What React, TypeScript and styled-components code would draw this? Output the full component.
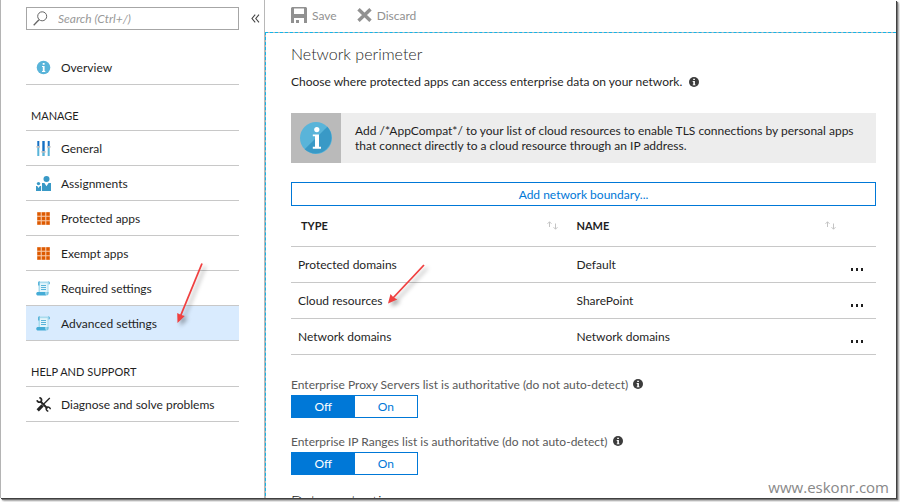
import React from "react";
import styled, { createGlobalStyle, css } from "styled-components";

const GlobalStyle = createGlobalStyle`
  * { box-sizing: border-box; }
  body {
    margin: 0;
    background: #fff;
    color: #1f1f1f;
    font: 12px/15px Lato, "Open Sans", sans-serif;
  }
  button, input { font: inherit; color: inherit; }
  button { padding: 0; border: 0; background: none; cursor: pointer; }
  h1, h2, p, ul, fieldset { margin: 0; padding: 0; }
  fieldset { border: 0; min-width: 0; }
  ul { list-style: none; }
`;

const Backdrop = styled.div`
  display: flex;
  height: 100vh;
  padding: 0 4px 4px 0;
  overflow: hidden;
`;

const Frame = styled.div`
  position: relative;
  display: flex;
  flex: 1;
  min-width: 0;
  border-left: 1px solid #b4b4b4;
  background: #fff;
  box-shadow: 1px 1px 0 #404040, 2px 2px 1px #777, 3px 3px 2px #aaa;
`;

const Sidebar = styled.aside`
  flex: none;
  width: 263px;
  padding: 7px 25px 0;
  overflow: hidden;
`;

const SearchRow = styled.div`
  display: flex;
  align-items: center;
  margin: 0 -22px 20px 0;
`;

const SearchBox = styled.label`
  display: flex;
  align-items: center;
  width: 213px;
  height: 23px;
  padding: 0 6px;
  gap: 10px;
  border: 1px solid #a6a6a6;
`;

const SearchInput = styled.input`
  flex: 1;
  min-width: 0;
  padding: 0;
  border: 0;
  outline: 0;
  background: none;
  &::placeholder {
    color: #999;
    font-style: italic;
    opacity: 1;
  }
`;

const CollapseButton = styled.button`
  display: flex;
  margin-left: 12px;
`;

const GroupTitle = styled.h2`
  margin-top: 17px;
  padding-left: 5px;
  font-size: 11px;
  font-weight: 400;
  line-height: 28px;
`;

const NavList = styled.ul<{ $ruled?: boolean }>`
  ${(p) => p.$ruled && css`border-top: 1px solid #c8c8c8;`}
`;

const NavItem = styled.li<{ $selected?: boolean }>`
  position: relative;
  border-bottom: 1px solid #c8c8c8;
  background: ${(p) => (p.$selected ? "#d9ebfe" : "transparent")};
`;

const NavLink = styled.a`
  display: flex;
  align-items: center;
  height: 34px;
  padding-left: 10px;
  gap: 10px;
  color: inherit;
  text-decoration: none;
`;

const Main = styled.main`
  flex: 1;
  min-width: 0;
  overflow: hidden;
  border-left: 1px solid #b8b8b8;
`;

const Toolbar = styled.div`
  display: flex;
  align-items: center;
  height: 32px;
  padding: 0 0 2px 26px;
  gap: 20px;
`;

const ToolButton = styled.button`
  display: flex;
  align-items: center;
  gap: 5px;
  color: #919191;
`;

const Content = styled.div`
  padding: 11px 20px 0 25px;
  border-top: 1px dashed #12b5ea;
  border-left: 1px dashed #12b5ea;
  background: linear-gradient(#fff, #fff) padding-box, linear-gradient(#b8b8b8, #b8b8b8) border-box;
`;

const SectionTitle = styled.h1`
  font-size: 16px;
  font-weight: 300;
  line-height: 20px;
`;

const Description = styled.p`
  display: flex;
  align-items: center;
  gap: 7px;
  margin-top: 10px;
  line-height: 16px;
`;

const Banner = styled.div`
  display: flex;
  margin-top: 23px;
  background: #ededed;
`;

const BannerIcon = styled.div`
  display: grid;
  place-items: center;
  flex: none;
  width: 50px;
  height: 50px;
  background: #bababa;
`;

const BannerText = styled.p`
  align-self: center;
  padding: 0 14px;
`;

const AddButton = styled.button`
  display: block;
  width: 100%;
  height: 24px;
  margin-top: 19px;
  border: 1px solid #0078d7;
  color: #0078d7;
`;

const Table = styled.table`
  width: 100%;
  table-layout: fixed;
  border-collapse: collapse;
`;

const HeadCell = styled.th<{ $width?: number; $indent?: number }>`
  width: ${(p) => (p.$width ? `${p.$width}px` : "auto")};
  height: 40px;
  padding: 0 12px 0 ${(p) => p.$indent ?? 7}px;
  border-bottom: 1px solid #c8c8c8;
  font-size: 11px;
  font-weight: 700;
  text-align: left;
`;

const HeadInner = styled.div`
  display: flex;
  align-items: center;
  justify-content: space-between;
`;

const Cell = styled.td`
  position: relative;
  height: 36px;
  padding: 0 0 0 7px;
  border-bottom: 1px solid #c8c8c8;
`;

const MoreButton = styled.button`
  display: flex;
  align-items: flex-end;
  width: 14px;
  height: 14px;
  margin-left: -4px;
`;

const Setting = styled.fieldset`
  margin-top: 21px;
  & + & { margin-top: 15px; }
`;

const SettingLabel = styled.legend`
  display: flex;
  align-items: center;
  gap: 5px;
  height: 19px;
  padding: 0 0 2px;
  color: #595959;
`;

const Toggle = styled.div`
  display: grid;
  grid-template-columns: 1fr 1fr;
  width: 127px;
  height: 23px;
  border: 1px solid #0078d7;
`;

const Option = styled.label`
  display: grid;
  place-items: center;
  color: #0078d7;
  cursor: pointer;
  &:has(input:checked) {
    background: #0078d7;
    color: #fff;
  }
`;

const HiddenRadio = styled.input`
  position: absolute;
  opacity: 0;
  pointer-events: none;
`;

const NextTitle = styled(SectionTitle)`
  margin-top: 16px;
`;

const Watermark = styled.div`
  position: absolute;
  right: 7px;
  bottom: 2px;
  color: #888;
  font: 15px/18px "Open Sans", sans-serif;
`;

const Annotation = styled.svg<{ $left: number; $top: number }>`
  position: absolute;
  z-index: 1;
  left: ${(p) => p.$left}px;
  top: ${(p) => p.$top}px;
  overflow: visible;
  pointer-events: none;
  filter: drop-shadow(3px 3px 2px rgba(0, 0, 0, 0.35));
`;

const SearchIcon = () => (
  <svg width="15" height="15" viewBox="0 0 15 15" fill="none" stroke="#666">
    <circle cx="9.2" cy="5.3" r="4.5" />
    <path d="M6 8.7 .7 14.2" strokeWidth="1.3" />
  </svg>
);

const ChevronsIcon = () => (
  <svg width="9" height="9" viewBox="0 0 9 9" fill="none" stroke="#444" strokeWidth="1.1">
    <path d="M4.2.7 1 4.5l3.2 3.8M8 .7 4.8 4.5 8 8.3" />
  </svg>
);

const OverviewIcon = () => (
  <svg width="15" height="15" viewBox="0 0 15 15">
    <circle cx="7.5" cy="7.5" r="6.8" fill="#59b4d9" />
    <path d="M6.7 3h1.9v1.8H6.7zM6 6h2.6v5H9.300v1H6v-1h.8V7H6z" fill="#fff" />
  </svg>
);

const SlidersIcon = () => (
  <svg width="15" height="15" viewBox="0 0 15 15">
    <path d="M1.300 0h2v6h-2zM6.300 0h2.400v10H6.300zM11.700 0h2v6h-2z" fill="#1470c4" />
    <path d="M1.300 6h2v9h-2zM6.300 11h2.400v4H6.300zM11.700 6h2v9h-2z" fill="#59b4d9" />
    <path d="M.5 5H4v1.800H.5zM5.500 10h4v1.800h-4zM11 5h3.500v1.800H11z" fill="#b9bcc0" />
  </svg>
);

const PeopleIcon = () => (
  <svg width="15" height="15" viewBox="0 0 15 15" fill="#3999c6">
    <circle cx="10.500" cy="3" r="3" />
    <path d="M6 7h2.400l2.100 3.200L12.600 7H15v8H6z" />
    <circle cx="2.500" cy="7.600" r="1.700" />
    <path d="M0 10h1.200l1.300 2 1.400-2h1.200v5H0z" />
  </svg>
);

const GridIcon = () => (
  <svg width="15" height="15" viewBox="0 0 15 15">
    <path d="M1 1h13v13H1z" fill="#f8c9a6" />
    <g fill="#dd5900">
      {[1, 5.5, 10].map((y) =>
        [1, 5.5, 10].map((x) => <path key={`${x}-${y}`} d={`M${x + 0.3} ${y + 0.3}h3.400v3.400h-3.400z`} />)
      )}
    </g>
  </svg>
);

const ScrollIcon = () => (
  <svg width="15" height="15" viewBox="0 0 15 15">
    <path d="M2.500.5h10v11.500l-1.500 2H2.500z" fill="#a9dcee" />
    <path d="M12 .2c2.500 0 2.500 3.300.6 3.300V1.500zM4 .2C2.300.2 2 1 2 2v2.500h1.500V2z" fill="#59b4d9" />
    <path d="M4 2.200h7.500V11H4z" fill="#e4f5fb" />
    <path d="M5 4.500h5M5 6.500h5M5 8.500h5" stroke="#59b4d9" />
    <path d="M1.500 11h8c-.8 1.200-.3 2.400 1 3.500h-9c-1.700-.3-1.700-3.200 0-3.500z" fill="#45acd6" />
    <path d="M10.500 14.500c1.600 0 2.200-.8 2.200-3.500h-2v2z" fill="#7dc8e3" />
  </svg>
);

const ToolsIcon = () => (
  <svg width="15" height="15" viewBox="0 0 15 15" fill="none" stroke="#252525">
    <path d="M4.500 4.500l7 7" strokeWidth="2" />
    <path d="M1 3.200c.5 2 2.500 2.500 4 1.500C6 3 5.500 1 3.300.7" strokeWidth="1.800" />
    <path d="M11 10.200c2-.6 3.200.8 3.300 2M10.300 11c-.4 1.700.6 3 2 3.200" strokeWidth="1.500" />
    <path d="M13.800 1 7.500 7.300" strokeWidth="1.300" />
    <path d="M6.600 8.400 1.700 13.300" strokeWidth="3.200" />
  </svg>
);

const SaveIcon = () => (
  <svg width="16" height="16" viewBox="0 0 16 16">
    <path fillRule="evenodd" fill="#919191" d="M1 0h14l1 1v15h-3v-5H3v5H0V1zM3 1.500V7h10V1.500zM5 13h3v3H5z" />
  </svg>
);

const DiscardIcon = () => (
  <svg width="15" height="14" viewBox="0 0 15 14" fill="none" stroke="#919191" strokeWidth="3.400">
    <path d="M1.500 1.200l12 11.600M13.500 1.200l-12 11.600" />
  </svg>
);

const HintIcon = () => (
  <svg width="10" height="10" viewBox="0 0 10 10">
    <circle cx="5" cy="5" r="5" fill="#3c3c3c" />
    <path d="M4.200 1.700h1.700v1.400H4.200zM3.700 4h2.200v3.400h.6v.9H3.700v-.9h.6V4.900h-.6z" fill="#fff" />
  </svg>
);

const BannerInfoIcon = () => (
  <svg width="32" height="32" viewBox="0 0 32 32">
    <circle cx="16" cy="16" r="16" fill="#59b4d9" />
    <path d="M27.300 4.700A16 16 0 0 1 4.700 27.300z" fill="#3999c6" />
    <circle cx="16.800" cy="7.600" r="2.600" fill="#fff" />
    <path d="M12.800 12.500h6.200v12.300h2v2h-8.200v-2h2.200V14.300h-2.200z" fill="#fff" />
  </svg>
);

const SortIcon = () => (
  <svg width="11" height="9" viewBox="0 0 11 9" fill="none" stroke="#c4c4c4">
    <path d="M2.500 6V.8M.5 2.800l2-2 2 2M8.500 2.500v5.700M6.500 6.200l2 2 2-2" />
  </svg>
);

const DotsIcon = () => (
  <svg width="13" height="3" viewBox="0 0 13 3" fill="#1f1f1f">
    <path d="M0 0h2v3H0zM5 0h2v3H5zM10 0h2v3h-2z" />
  </svg>
);

const navItems = [
  { label: "General", Icon: SlidersIcon },
  { label: "Assignments", Icon: PeopleIcon },
  { label: "Protected apps", Icon: GridIcon },
  { label: "Exempt apps", Icon: GridIcon },
  { label: "Required settings", Icon: ScrollIcon },
  { label: "Advanced settings", Icon: ScrollIcon, selected: true },
];

const boundaries = [
  { type: "Protected domains", name: "Default" },
  { type: "Cloud resources", name: "SharePoint", marked: true },
  { type: "Network domains", name: "Network domains" },
];

const settings = [
  { id: "proxy", label: "Enterprise Proxy Servers list is authoritative (do not auto-detect)" },
  { id: "ranges", label: "Enterprise IP Ranges list is authoritative (do not auto-detect)" },
];

function NavEntry({ label, Icon, selected }: { label: string; Icon: React.FC; selected?: boolean }) {
  return (
    <NavItem $selected={selected}>
      <NavLink href="#" aria-current={selected ? "page" : undefined}>
        <Icon />
        {label}
      </NavLink>
      {selected && (
        <Annotation $left={151} $top={-43} width="26" height="60" viewBox="0 0 26 60" aria-hidden="true">
          <path d="M25 .5 3.500 53" stroke="#f04040" strokeWidth="1.800" />
          <path d="M.5 60 .2 50l3.400 1.800 4.200 1.300z" fill="#f04040" />
        </Annotation>
      )}
    </NavItem>
  );
}

export default function App() {
  return (
    <Backdrop>
      <GlobalStyle />
      <Frame>
        <Sidebar>
          <SearchRow>
            <SearchBox>
              <SearchIcon />
              <SearchInput type="search" aria-label="Search" placeholder="Search (Ctrl+/)" />
            </SearchBox>
            <CollapseButton aria-label="Collapse menu">
              <ChevronsIcon />
            </CollapseButton>
          </SearchRow>
          <nav>
            <NavList>
              <NavEntry label="Overview" Icon={OverviewIcon} />
            </NavList>
            <GroupTitle>MANAGE</GroupTitle>
            <NavList $ruled>
              {navItems.map((item) => (
                <NavEntry key={item.label} {...item} />
              ))}
            </NavList>
            <GroupTitle>HELP AND SUPPORT</GroupTitle>
            <NavList $ruled>
              <NavEntry label="Diagnose and solve problems" Icon={ToolsIcon} />
            </NavList>
          </nav>
        </Sidebar>
        <Main>
          <Toolbar>
            <ToolButton><SaveIcon />Save</ToolButton>
            <ToolButton><DiscardIcon />Discard</ToolButton>
          </Toolbar>
          <Content>
            <SectionTitle>Network perimeter</SectionTitle>
            <Description>
              Choose where protected apps can access enterprise data on your network.
              <HintIcon />
            </Description>
            <Banner>
              <BannerIcon><BannerInfoIcon /></BannerIcon>
              <BannerText>
                Add /*AppCompat*/ to your list of cloud resources to enable TLS connections by personal apps
                that connect directly to a cloud resource through an IP address.
              </BannerText>
            </Banner>
            <AddButton>Add network boundary...</AddButton>
            <Table>
              <thead>
                <tr>
                  <HeadCell $indent={10}><HeadInner>TYPE<SortIcon /></HeadInner></HeadCell>
                  <HeadCell><HeadInner>NAME<SortIcon /></HeadInner></HeadCell>
                  <HeadCell $width={28} aria-label="Actions" />
                </tr>
              </thead>
              <tbody>
                {boundaries.map((row) => (
                  <tr key={row.type}>
                    <Cell>
                      {row.type}
                      {row.marked && (
                        <Annotation $left={97} $top={-19} width="37" height="40" viewBox="0 0 37 40" aria-hidden="true">
                          <path d="M36 1 5 34" stroke="#f04040" strokeWidth="1.800" />
                          <path d="M0 39.500 2.500 30l2.800 3.200 4 2.200z" fill="#f04040" />
                        </Annotation>
                      )}
                    </Cell>
                    <Cell>{row.name}</Cell>
                    <Cell>
                      <MoreButton aria-label={`More actions for ${row.type}`}><DotsIcon /></MoreButton>
                    </Cell>
                  </tr>
                ))}
              </tbody>
            </Table>
            {settings.map(({ id, label }) => (
              <Setting key={id}>
                <SettingLabel>{label}<HintIcon /></SettingLabel>
                <Toggle>
                  <Option><HiddenRadio type="radio" name={id} defaultChecked />Off</Option>
                  <Option><HiddenRadio type="radio" name={id} />On</Option>
                </Toggle>
              </Setting>
            ))}
            <NextTitle as="h2">Data protection</NextTitle>
          </Content>
        </Main>
        <Watermark>www.eskonr.com</Watermark>
      </Frame>
    </Backdrop>
  );
}
